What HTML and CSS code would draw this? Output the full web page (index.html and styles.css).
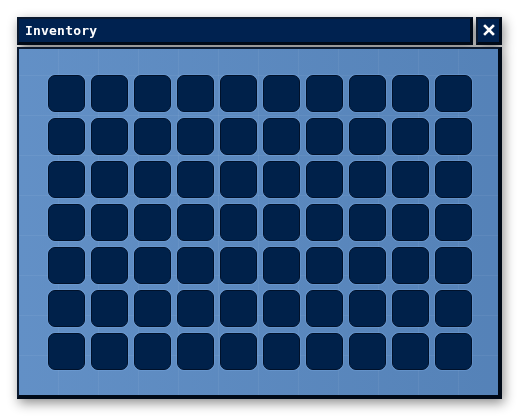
FILE: index.html
```html
<!DOCTYPE html>
<html>
<head>
<meta charset="utf-8">
<link rel="stylesheet" href="styles.css">
</head>
<body>
<div class="window">
  <div class="header">
    <div class="title">Inventory</div>
    <div class="close">
      <svg width="12" height="12" viewBox="0 0 12 12"><path d="M2 2 L10 10 M10 2 L2 10" stroke="#fff" stroke-width="2.6" stroke-linecap="square"/></svg>
    </div>
  </div>
  <div class="panel">
    <div class="grid">
      <div class="slot"></div><div class="slot"></div><div class="slot"></div><div class="slot"></div><div class="slot"></div><div class="slot"></div><div class="slot"></div><div class="slot"></div><div class="slot"></div><div class="slot"></div>
      <div class="slot"></div><div class="slot"></div><div class="slot"></div><div class="slot"></div><div class="slot"></div><div class="slot"></div><div class="slot"></div><div class="slot"></div><div class="slot"></div><div class="slot"></div>
      <div class="slot"></div><div class="slot"></div><div class="slot"></div><div class="slot"></div><div class="slot"></div><div class="slot"></div><div class="slot"></div><div class="slot"></div><div class="slot"></div><div class="slot"></div>
      <div class="slot"></div><div class="slot"></div><div class="slot"></div><div class="slot"></div><div class="slot"></div><div class="slot"></div><div class="slot"></div><div class="slot"></div><div class="slot"></div><div class="slot"></div>
      <div class="slot"></div><div class="slot"></div><div class="slot"></div><div class="slot"></div><div class="slot"></div><div class="slot"></div><div class="slot"></div><div class="slot"></div><div class="slot"></div><div class="slot"></div>
      <div class="slot"></div><div class="slot"></div><div class="slot"></div><div class="slot"></div><div class="slot"></div><div class="slot"></div><div class="slot"></div><div class="slot"></div><div class="slot"></div><div class="slot"></div>
      <div class="slot"></div><div class="slot"></div><div class="slot"></div><div class="slot"></div><div class="slot"></div><div class="slot"></div><div class="slot"></div><div class="slot"></div><div class="slot"></div><div class="slot"></div>
    </div>
  </div>
</div>
</body>
</html>
```

FILE: styles.css
```css
html, body {
  margin: 0;
  padding: 0;
  background: #ffffff;
}
body {
  width: 520px;
  height: 416px;
  overflow: hidden;
}
.window {
  margin: 17px 0 0 17px;
  width: 485px;
  display: flex;
  flex-direction: column;
  gap: 2px;
  filter: drop-shadow(2px 4px 6px rgba(0, 0, 0, 0.45));
}
.header {
  display: flex;
  gap: 3px;
  height: 28px;
}
.title {
  box-sizing: border-box;
  width: 456px;
  height: 28px;
  background: #002250;
  border: 2px solid #0b1a30;
  border-right-width: 3px;
  border-bottom-width: 3px;
  border-right-color: #000a18;
  border-bottom-color: #000a18;
  color: #ffffff;
  font-family: "DejaVu Sans Mono", "Liberation Mono", monospace;
  font-weight: bold;
  font-size: 13px;
  line-height: 23px;
  padding-left: 6px;
  letter-spacing: 0.2px;
}
.close {
  box-sizing: border-box;
  width: 26px;
  height: 28px;
  background: #002250;
  border: 2px solid #0b1a30;
  border-right-width: 3px;
  border-bottom-width: 3px;
  border-right-color: #000a18;
  border-bottom-color: #000a18;
  display: flex;
  align-items: center;
  justify-content: center;
  padding-bottom: 1px;
}
.close svg {
  display: block;
}
.panel {
  box-sizing: border-box;
  width: 485px;
  height: 352px;
  border: 2px solid #0b1a30;
  border-right-width: 4px;
  border-bottom-width: 4px;
  border-right-color: #000a18;
  border-bottom-color: #000a18;
  background-color: #5a8ac3;
  background-image:
    repeating-linear-gradient(90deg, rgba(255,255,255,0) 0 39px, rgba(255,255,255,0.05) 39px 40px),
    repeating-linear-gradient(0deg, rgba(255,255,255,0) 0 39px, rgba(255,255,255,0.05) 39px 40px),
    linear-gradient(90deg, rgba(255,255,255,0.05), rgba(0,0,0,0.06));
  display: flex;
  align-items: center;
  justify-content: center;
  padding-left: 3px;
}
.grid {
  display: grid;
  grid-template-columns: repeat(10, 37px);
  grid-auto-rows: 37px;
  gap: 6px;
}
.slot {
  box-sizing: border-box;
  background: #00214a;
  border: 1px solid #00112a;
  border-radius: 7px;
  box-shadow: 0 0 0 1px rgba(120, 170, 225, 0.35);
}
```
